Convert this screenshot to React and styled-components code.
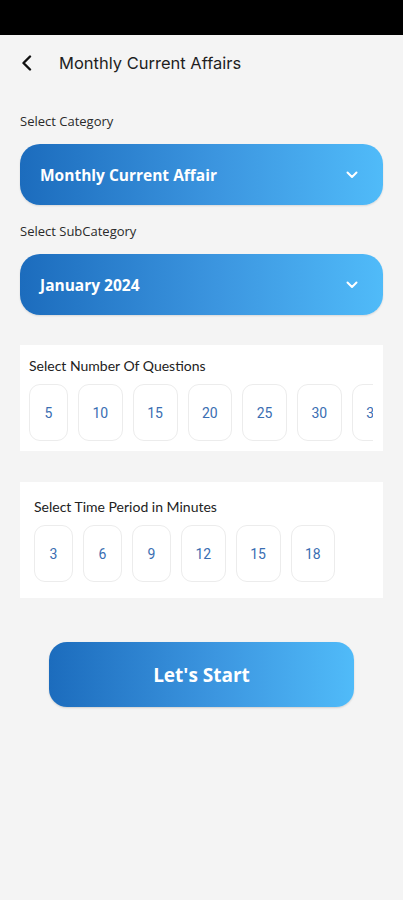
import React, { useState } from 'react';
import styled, { createGlobalStyle } from 'styled-components';

const GlobalStyle = createGlobalStyle`
  body {
    margin: 0;
    background: #f4f4f4;
    font-family: "Open Sans", "Liberation Sans", sans-serif;
  }
`;

const Page = styled.div`
  width: 403px;
  min-height: 900px;
  background: #f4f4f4;
`;

const StatusBar = styled.div`
  height: 35px;
  background: #000;
`;

const Header = styled.div`
  display: flex;
  align-items: center;
  height: 56px;
  padding: 0 20px;
  gap: 25px;
`;

const BackButton = styled.button`
  border: 0;
  background: none;
  padding: 0;
  display: flex;
  align-items: center;
  cursor: pointer;
`;

const Title = styled.h1`
  margin: 0;
  font-family: "Inter", "Liberation Sans", sans-serif;
  font-size: 16.5px;
  font-weight: 400;
  color: #1e1e1e;
`;

const Content = styled.div`
  padding: 21px 20px 0;
  display: flex;
  flex-direction: column;
`;

const Label = styled.div`
  font-size: 13px;
  color: #2a2a2a;
  margin-bottom: 14px;
`;

const Dropdown = styled.div`
  height: 61px;
  border-radius: 20px;
  background: linear-gradient(90deg, #1c6cbd 0%, #3c96e0 55%, #50bbf9 100%);
  display: flex;
  align-items: center;
  justify-content: space-between;
  padding: 0 25px 0 20px;
  color: #fff;
  font-size: 15.5px;
  font-weight: 700;
  margin-bottom: 17px;
  box-shadow: 0 1px 2px rgba(0, 0, 0, 0.12);
`;

const Card = styled.div`
  background: #fff;
  margin-top: ${p => p.$top}px;
  padding: ${p => p.$pad};
  display: flex;
  flex-direction: column;
  gap: 10px;
  overflow: hidden;
`;

const CardTitle = styled.div`
  font-family: "Lato", "Liberation Sans", sans-serif;
  font-size: 14px;
  color: #222;
`;

const ChipRow = styled.div`
  display: flex;
  gap: 10px;
  overflow: hidden;
`;

const Chip = styled.div`
  flex: 0 0 auto;
  height: 57px;
  min-width: 39px;
  box-sizing: border-box;
  padding: 0 13.5px;
  border: 1px solid #ececec;
  border-radius: 11px;
  display: flex;
  align-items: center;
  justify-content: center;
  font-family: "Roboto", "Liberation Sans", sans-serif;
  font-size: 14px;
  color: #3a6eb2;
  background: ${p => (p.$active ? '#eaf4fd' : '#fff')};
`;

const StartButton = styled.button`
  align-self: center;
  margin-top: 44px;
  width: 305px;
  height: 65px;
  border: 0;
  border-radius: 18px;
  background: linear-gradient(90deg, #1c6cbd 0%, #3c96e0 55%, #50bbf9 100%);
  color: #fff;
  font-family: "Open Sans", "Liberation Sans", sans-serif;
  font-size: 19px;
  font-weight: 700;
  cursor: pointer;
  box-shadow: 0 1px 2px rgba(0, 0, 0, 0.15);
`;

function Chevron() {
  return (
    <svg width="12" height="8" viewBox="0 0 12 8" fill="none">
      <path d="M1.5 1.5L6 6l4.5-4.5" stroke="#fff" strokeWidth="2" strokeLinecap="round" strokeLinejoin="round" />
    </svg>
  );
}

const questions = [5, 10, 15, 20, 25, 30, 35, 40];
const minutes = [3, 6, 9, 12, 15, 18];

export default function App() {
  const [count, setCount] = useState(null);
  const [time, setTime] = useState(null);

  return (
    <Page>
      <GlobalStyle />
      <StatusBar />
      <Header>
        <BackButton>
          <svg width="14" height="16" viewBox="0 0 14 16" fill="none">
            <path d="M10 1.5L3.5 8l6.5 6.5" stroke="#111" strokeWidth="2.4" strokeLinecap="round" strokeLinejoin="round" />
          </svg>
        </BackButton>
        <Title>Monthly Current Affairs</Title>
      </Header>
      <Content>
        <Label>Select Category</Label>
        <Dropdown>
          <span>Monthly Current Affair</span>
          <Chevron />
        </Dropdown>
        <Label>Select SubCategory</Label>
        <Dropdown>
          <span>January 2024</span>
          <Chevron />
        </Dropdown>

        <Card $top={13} $pad="12px 10px 10px 9px">
          <CardTitle>Select Number Of Questions</CardTitle>
          <ChipRow>
            {questions.map(q => (
              <Chip key={q} $active={count === q} onClick={() => setCount(q)}>{q}</Chip>
            ))}
          </ChipRow>
        </Card>

        <Card $top={31} $pad="16px 10px 16px 14px">
          <CardTitle>Select Time Period in Minutes</CardTitle>
          <ChipRow>
            {minutes.map(m => (
              <Chip key={m} $active={time === m} onClick={() => setTime(m)}>{m}</Chip>
            ))}
          </ChipRow>
        </Card>

        <StartButton>Let's Start</StartButton>
      </Content>
    </Page>
  );
}
